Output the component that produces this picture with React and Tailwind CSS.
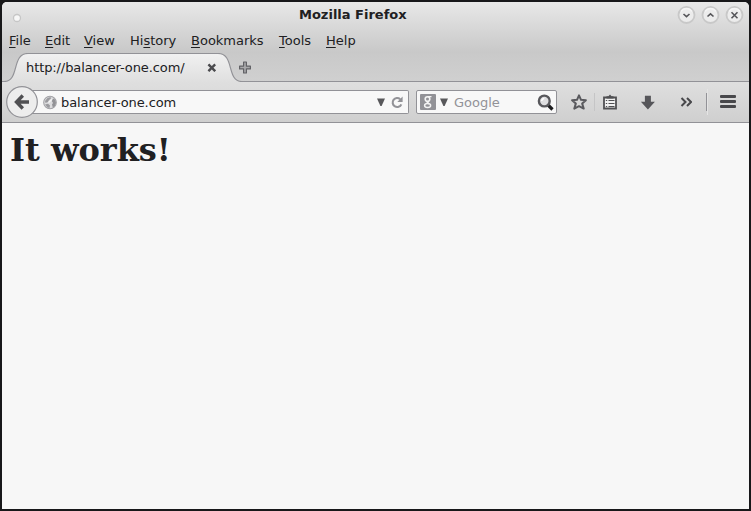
import React from "react";

function MenuItem({ before = "", hot, after, width }) {
  return (
    <span className={"block shrink-0 whitespace-nowrap " + width}>
      {before}
      <span className="underline decoration-1 underline-offset-2">{hot}</span>
      {after}
    </span>
  );
}

function WindowButton({ d }) {
  return (
    <svg width="20" height="20" viewBox="0 0 20 20" fill="none">
      <circle cx="10.500" cy="10" r="8" fill="#ececec" stroke="#c8c8c8" strokeWidth="1.800" />
      <path d="M5 6.500a6.500 6.500 0 0 1 11 0" stroke="#f5f5f5" strokeWidth="1.500" />
      <path d={d} stroke="#56565a" strokeWidth="1.600" />
    </svg>
  );
}

function TitleBar() {
  return (
    <header className="flex h-[28px] shrink-0 items-center pl-[9px] pr-[5px]">
      <svg className="mt-[4px]" width="12" height="12" viewBox="0 0 12 12">
        <circle cx="6" cy="6" r="3.5" fill="#f7f7f7" stroke="#c6c6c6" strokeWidth="1.3" />
      </svg>
      <h1 className="ml-[276px] w-[180px] whitespace-nowrap text-[13px] font-bold leading-[16px] -mt-[3px]">
        Mozilla Firefox
      </h1>
      <div className="-mt-[2px] ml-auto flex gap-[4px]">
        <WindowButton d="M7.500 9l3 2.700 3-2.700" />
        <WindowButton d="M7.500 11.500l3-2.700 3 2.700" />
        <WindowButton d="M7.500 7.300l6 6M13.500 7.300l-6 6" />
      </div>
    </header>
  );
}

function MenuBar() {
  return (
    <nav className="flex h-[23px] shrink-0 items-start pl-[7px] pt-[3px] text-[13px] leading-[16px]">
      <MenuItem hot="F" after="ile" width="w-[36px]" />
      <MenuItem hot="E" after="dit" width="w-[39px]" />
      <MenuItem hot="V" after="iew" width="w-[46px]" />
      <MenuItem before="Hi" hot="s" after="tory" width="w-[61px]" />
      <MenuItem hot="B" after="ookmarks" width="w-[88px]" />
      <MenuItem hot="T" after="ools" width="w-[47px]" />
      <MenuItem hot="H" after="elp" width="w-[40px]" />
    </nav>
  );
}

function TabStrip() {
  return (
    <div className="relative flex h-[29px] shrink-0 items-start bg-gradient-to-b from-[#c9c9c9] to-[#d0d0d0] pl-[24px]">
      <svg className="absolute left-0 top-0" width="747" height="29" viewBox="0 0 747 29" fill="none">
        <defs>
          <linearGradient id="tab" x1="0" y1="0" x2="0" y2="1">
            <stop offset="0" stopColor="#f1f1f1" />
            <stop offset="1" stopColor="#dfdfdf" />
          </linearGradient>
        </defs>
        <path
          d="M2 28.5C18 28.5 9 0.5 26 0.5H216C233 .5 224 28.5 240 28.5V29H2Z"
          fill="url(#tab)"
        />
        <path
          d="M0 28.5H2C18 28.5 9 0.5 26 0.5H216C233 .5 224 28.5 240 28.5H747"
          stroke="#929297"
          strokeWidth="1.2"
        />
      </svg>
      <span className="relative mt-[7px] w-[181px] whitespace-nowrap text-[13px] leading-[16px] tracking-[-0.1px]">
        http://balancer-one.com/
      </span>
      <svg className="relative mt-[10px]" width="9" height="9" viewBox="0 0 9 9" fill="none">
        <path d="M1.400 1.400l6.800 6.800M8.200 1.400L1.400 8.200" stroke="#4b4b4e" strokeWidth="2.400" />
      </svg>
      <svg className="relative ml-[23px] mt-[8px]" width="12" height="13" viewBox="0 0 12 13">
        <path
          d="M4.600 1h2.800v4.100h4v2.800h-4V12H4.600V7.900h-4V5.100h4z"
          fill="#a9a9ab"
          stroke="#626266"
          strokeWidth="1.200"
          strokeLinejoin="round"
        />
      </svg>
    </div>
  );
}

function DropArrow() {
  return (
    <svg width="8" height="8" viewBox="0 0 8 8">
      <path d="M0 .5h8L4.600 8H3.400z" fill="#58585b" />
    </svg>
  );
}

function AddressBar() {
  return (
    <div className="flex h-[24px] w-[388px] shrink-0 items-center border border-l-0 border-[#929297] rounded-r-[2px] bg-[#f8f8f8] pl-[22px] pr-[4px]">
      <svg width="15" height="15" viewBox="0 0 15 15" fill="none">
        <circle cx="7" cy="7.500" r="6.300" fill="#dcdcde" stroke="#a2a2a6" strokeWidth="1.100" />
        <path d="M2 6l2.500-3 3-1 .5 1.500-2 1.500-1 2-2.500 1z" fill="#9b9b9f" />
        <path d="M8.500 5.500l2-2 1.800 1.500.7 3-1.200 3-2 1.500-.8-3 1-1.500z" fill="#929296" />
        <path d="M2 9.500l3-.8 2 1.800-.5 2.500-2-.5z" fill="#9b9b9f" />
        <path d="M5.500 7.500L9 4.500" stroke="#f6f6f6" strokeWidth="1.300" />
      </svg>
      <span className="ml-[3px] mt-[2px] flex-1 whitespace-nowrap text-[13px] leading-[16px] tracking-[-0.1px]">
        balancer-one.com
      </span>
      <DropArrow />
      <svg className="ml-[5px]" width="14" height="14" viewBox="0 0 14 14" fill="none">
        <path d="M10.200 4.200A4.500 4.500 0 1 0 11.300 9.300" stroke="#929297" strokeWidth="2.100" />
        <path d="M12.600 1.500v5.500H7.300z" fill="#929297" />
      </svg>
    </div>
  );
}

function SearchBox() {
  return (
    <div className="ml-[7px] flex h-[24px] w-[141px] shrink-0 items-center rounded-[2px] border border-[#929297] bg-[#f8f8f8] pl-[3px] pr-[2px]">
      <svg width="16" height="16" viewBox="0 0 16 16" fill="none">
        <rect width="16" height="16" rx="1" fill="#929297" />
        <ellipse cx="7.500" cy="5" rx="2.300" ry="2.300" stroke="#f4f4f4" strokeWidth="1.600" />
        <path d="M7.500 2.700h4M9 7.200L7.300 8.600l2 1.300" stroke="#f4f4f4" strokeWidth="1.300" />
        <ellipse cx="7.600" cy="11.400" rx="3" ry="2" stroke="#f4f4f4" strokeWidth="1.500" />
      </svg>
      <span className="ml-[4px] flex"><DropArrow /></span>
      <span className="ml-[6px] mt-[2px] flex-1 text-[13px] leading-[16px] text-[#929297]">Google</span>
      <svg width="17" height="17" viewBox="0 0 17 17" fill="none">
        <path d="M11 11l4.500 4.500" stroke="#1c1c1e" strokeWidth="3.200" />
        <circle cx="7.300" cy="7" r="5.400" fill="#dedee0" stroke="#58585c" strokeWidth="2.400" />
        <path d="M4.800 7A2.500 2.500 0 0 1 7.300 4.500" stroke="#fff" strokeWidth="1.500" />
      </svg>
    </div>
  );
}

function Toolbar() {
  return (
    <div className="flex h-[41px] shrink-0 items-center border-b border-[#929297] bg-gradient-to-b from-[#dfdfdf] to-[#cfcfcf] pl-[19px]">
      <div className="relative shrink-0">
        <AddressBar />
        <svg className="absolute -left-[15px] -top-[4px]" width="32" height="32" viewBox="0 0 32 32" fill="none">
          <circle cx="16" cy="16" r="15.300" fill="#ededed" stroke="#929297" strokeWidth="1.200" />
          <path d="M16.800 9.500L10.500 16l6.300 6.500M11 16h12" stroke="#505053" strokeWidth="3.400" />
        </svg>
      </div>
      <SearchBox />
      <svg className="ml-[14px] shrink-0" width="16" height="16" viewBox="0 0 16 16" fill="none">
        <path d="M8 1.300l2 4.500 4.900.4-3.700 3.400 1.500 5L8 12.200l-4.700 2.400 1.500-5L1.100 6.200 6 5.800z" fill="#d9d9d9" stroke="#5a5a5e" strokeWidth="2" strokeLinejoin="round" />
      </svg>
      <span className="ml-[7px] h-[18px] w-px shrink-0 bg-[#c5c5c6]" />
      <svg className="ml-[8px] shrink-0" width="15" height="16" viewBox="0 0 15 16" fill="none">
        <path d="M1 3.500h12v11H1z" fill="#f0f0f0" stroke="#505053" strokeWidth="1.800" />
        <path d="M3.500 4.500V2.300h2L7 .5l1.500 1.800h2v2.200z" fill="#505053" />
        <path d="M2.800 6.500h1.400M5.500 6.500h6M2.800 9.500h1.400M5.500 9.500h6M2.800 12.500h1.400M5.500 12.500h6" stroke="#505053" strokeWidth="1.100" />
      </svg>
      <svg className="ml-[22px] shrink-0" width="15" height="15" viewBox="0 0 15 15">
        <path d="M4.900 .8h6v6h4L7.900 14.500.9 6.800h4z" fill="#56565a" />
      </svg>
      <svg className="ml-[25px] shrink-0" width="12" height="10" viewBox="0 0 12 10" fill="none">
        <path d="M1.500 1l4 4-4 4M7 1l4 4-4 4" stroke="#48484b" strokeWidth="2" />
      </svg>
      <span className="ml-[14px] h-[18px] w-px shrink-0 bg-[#929297]" />
      <span className="h-[26px] w-px shrink-0 bg-[#e4e4e4]" />
      <div className="-mt-[2px] ml-[12px] flex w-[16px] shrink-0 flex-col gap-[2px]">
        <span className="h-[3px] rounded-[1px] bg-[#48484b]" />
        <span className="h-[3px] rounded-[1px] bg-[#48484b]" />
        <span className="h-[3px] rounded-[1px] bg-[#48484b]" />
      </div>
    </div>
  );
}

export default function App() {
  return (
    <div className="h-[511px] w-[751px] bg-[#18181a] p-[2px] font-['DejaVu_Sans',sans-serif] text-[#202022]">
      <div className="flex h-[507px] w-[747px] flex-col overflow-hidden rounded-t-[5px] bg-[#f7f7f7]">
        <div className="shrink-0 bg-gradient-to-b from-[#e8e8e8] to-[#c8c8c8]">
          <TitleBar />
          <MenuBar />
        </div>
        <TabStrip />
        <Toolbar />
        <main className="flex-1 px-[8px] pt-[8px]">
          <h2 className="font-['DejaVu_Serif',serif] text-[32px] font-bold leading-[38px]">It works!</h2>
        </main>
      </div>
    </div>
  );
}
